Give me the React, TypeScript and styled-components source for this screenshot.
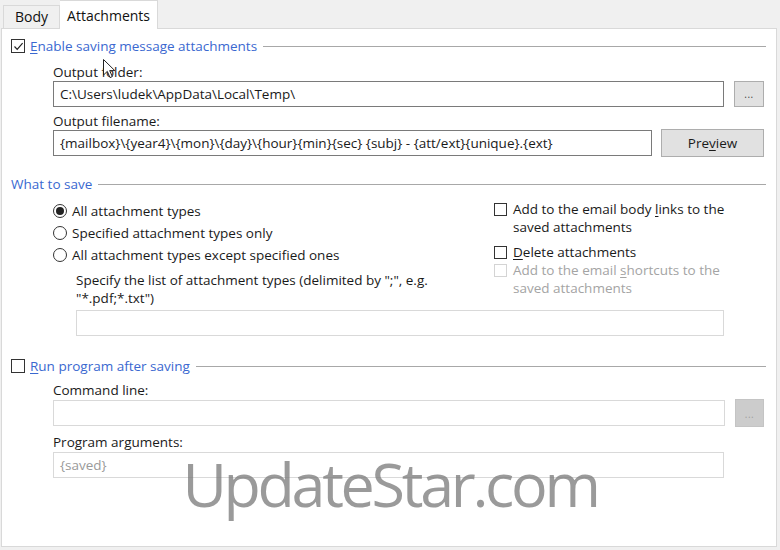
import React from "react";
import styled, { createGlobalStyle } from "styled-components";

const GlobalStyle = createGlobalStyle`
  html, body { margin: 0; padding: 0; background: #f0f0f0; }
  body {
    font-family: "Open Sans", "Noto Sans", "DejaVu Sans", sans-serif;
    font-size: 13.5px;
    color: #1a1a1a;
  }
  * { box-sizing: border-box; }
`;

const Window = styled.div`
  position: relative;
  width: 780px;
  height: 550px;
  padding: 0 3px 3px 1px;
  display: flex;
  flex-direction: column;
  overflow: hidden;
  background: #f0f0f0;
`;

const TabStrip = styled.div`
  display: flex;
  align-items: flex-end;
  height: 28px;
  padding-left: 2px;
`;

const Tab = styled.div<{ $active?: boolean }>`
  height: ${(p) => (p.$active ? "29px" : "23px")};
  margin-bottom: ${(p) => (p.$active ? "-1px" : "0")};
  padding: ${(p) => (p.$active ? "5px 7px 0 7px" : "1px 11px 0 11px")};
  border: 1px solid #d9d9d9;
  border-bottom: none;
  border-left: ${(p) => (p.$active ? "none" : "1px solid #d9d9d9")};
  background: ${(p) => (p.$active ? "#ffffff" : "#f0f0f0")};
  line-height: 20px;
  font-size: 14px;
  color: #111;
  position: relative;
  z-index: 1;
`;

const Panel = styled.div`
  flex: 1;
  background: #ffffff;
  border: 1px solid #d9d9d9;
  padding: 8px 12px 0 9px;
  display: flex;
  flex-direction: column;
`;

const GroupHeader = styled.div<{ $mt?: number }>`
  display: flex;
  align-items: center;
  height: 18px;
  margin-top: ${(p) => p.$mt ?? 0}px;
  color: #3a68d0;
  white-space: nowrap;
`;

const HeaderLine = styled.div`
  flex: 1;
  height: 1px;
  background: #a8a8a8;
  margin-left: 6px;
  margin-right: -2px;
`;

const Acc = styled.span`
  text-decoration: underline;
  text-underline-offset: 2px;
`;

const Box = styled.span<{ $disabled?: boolean }>`
  display: inline-flex;
  align-items: center;
  justify-content: center;
  flex: none;
  width: 13px;
  height: 13px;
  border: 1px solid ${(p) => (p.$disabled ? "#d4d4d4" : "#333")};
  background: #fff;
`;

const HeaderBox = styled(Box)`
  width: 14px;
  height: 14px;
  margin-left: 0;
  margin-right: 5px;
`;

const Field = styled.div`
  margin-left: 42px;
  display: flex;
  flex-direction: column;
`;

const FieldLabel = styled.div<{ $mt?: number }>`
  height: 18px;
  line-height: 18px;
  margin-top: ${(p) => p.$mt ?? 0}px;
  white-space: nowrap;
`;

const InputRow = styled.div<{ $mt?: number }>`
  display: flex;
  align-items: center;
  gap: 10px;
  margin-top: ${(p) => p.$mt ?? 0}px;
`;

const TextBox = styled.div<{ $disabled?: boolean; $h?: number; $ml?: number; $mr?: number }>`
  flex: 1;
  height: ${(p) => p.$h ?? 26}px;
  margin-left: ${(p) => p.$ml ?? 0}px;
  margin-right: ${(p) => p.$mr ?? 0}px;
  border: 1px solid ${(p) => (p.$disabled ? "#d9d9d9" : "#7a7a7a")};
  background: #fff;
  padding: 0 6px;
  display: flex;
  align-items: center;
  white-space: nowrap;
  overflow: hidden;
  color: ${(p) => (p.$disabled ? "#9a9a9a" : "#1a1a1a")};
`;

const Button = styled.div<{ $w: number; $h?: number; $disabled?: boolean }>`
  flex: none;
  width: ${(p) => p.$w}px;
  height: ${(p) => p.$h ?? 26}px;
  border: 1px solid ${(p) => (p.$disabled ? "#c4c4c4" : "#adadad")};
  background: ${(p) => (p.$disabled ? "#cccccc" : "#e1e1e1")};
  display: flex;
  align-items: center;
  justify-content: center;
  color: ${(p) => (p.$disabled ? "#a8a8a8" : "#1a1a1a")};
`;

const Dots = styled.span<{ $disabled?: boolean }>`
  font-size: 10px;
  letter-spacing: 0.5px;
  color: ${(p) => (p.$disabled ? "#a0a0a0" : "#444")};
  margin-top: ${(p) => (p.$disabled ? "2px" : "-1px")};
`;

const Columns = styled.div`
  display: flex;
  margin-top: 7px;
  margin-left: 42px;
`;

const LeftCol = styled.div`
  width: 441px;
  display: flex;
  flex-direction: column;
`;

const RightCol = styled.div`
  flex: 1;
  display: flex;
  flex-direction: column;
`;

const RadioRow = styled.div`
  display: flex;
  align-items: center;
  gap: 5px;
  height: 22px;
`;

const Radio = styled.span<{ $on?: boolean }>`
  flex: none;
  width: 14px;
  height: 14px;
  border-radius: 50%;
  border: 1px solid #333;
  background: #fff;
  display: inline-flex;
  align-items: center;
  justify-content: center;
  &::after {
    content: "";
    display: ${(p) => (p.$on ? "block" : "none")};
    width: 8px;
    height: 8px;
    border-radius: 50%;
    background: #222;
  }
`;

const HintText = styled.div`
  margin-top: 5px;
  margin-left: 23px;
  line-height: 18px;
  white-space: nowrap;
`;

const CheckRow = styled.div<{ $mt?: number; $disabled?: boolean }>`
  display: flex;
  align-items: flex-start;
  gap: 6px;
  margin-top: ${(p) => p.$mt ?? 0}px;
  line-height: 18px;
  color: ${(p) => (p.$disabled ? "#a4a4a4" : "#1a1a1a")};
  white-space: nowrap;
  & > ${Box} {
    margin-top: 3px;
  }
`;

const Watermark = styled.div`
  position: absolute;
  left: 0;
  right: 0;
  top: 453px;
  text-align: center;
  font-family: "Open Sans", "Noto Sans", sans-serif;
  font-size: 61px;
  line-height: 61px;
  letter-spacing: -3.3px;
  color: rgba(120, 120, 120, 0.75);
  pointer-events: none;
`;

const Cursor = styled.svg`
  position: absolute;
  left: 103px;
  top: 59px;
`;

const Check = () => (
  <svg width="11" height="11" viewBox="0 0 11 11">
    <path d="M1.5 5.5 L4.2 8.3 L9.6 2.2" fill="none" stroke="#222" strokeWidth="1.2" />
  </svg>
);

export default function App() {
  return (
    <>
      <GlobalStyle />
      <Window>
        <TabStrip>
          <Tab>Body</Tab>
          <Tab $active>Attachments</Tab>
        </TabStrip>
        <Panel>
          <GroupHeader>
            <HeaderBox>
              <Check />
            </HeaderBox>
            <span>
              <Acc>E</Acc>nable saving message attachments
            </span>
            <HeaderLine />
          </GroupHeader>
          <Field>
            <FieldLabel $mt={8}>Output folder:</FieldLabel>
            <InputRow>
              <TextBox $h={26}>C:\Users\ludek\AppData\Local\Temp\</TextBox>
              <Button $w={30} $h={26}>
                <Dots>...</Dots>
              </Button>
            </InputRow>
            <FieldLabel $mt={5}>Output filename:</FieldLabel>
            <InputRow $mt={-1}>
              <TextBox $h={26} style={{ marginRight: -1 }}>
                {"{mailbox}\\{year4}\\{mon}\\{day}\\{hour}{min}{sec} {subj} - {att/ext}{unique}.{ext}"}
              </TextBox>
              <Button $w={103} $h={28}>
                Pre<Acc>v</Acc>iew
              </Button>
            </InputRow>
          </Field>

          <GroupHeader $mt={18}>
            <span>What to save</span>
            <HeaderLine />
          </GroupHeader>
          <Columns>
            <LeftCol>
              <RadioRow>
                <Radio $on />
                All attachment types
              </RadioRow>
              <RadioRow>
                <Radio />
                Specified attachment types only
              </RadioRow>
              <RadioRow>
                <Radio />
                All attachment types except specified ones
              </RadioRow>
              <HintText>
                Specify the list of attachment types (delimited by ";", e.g.
                <br />
                "*.pdf;*.txt")
              </HintText>
            </LeftCol>
            <RightCol>
              <CheckRow>
                <Box />
                <span>
                  Add to the email body <Acc>l</Acc>inks to the
                  <br />
                  saved attachments
                </span>
              </CheckRow>
              <CheckRow $mt={7}>
                <Box />
                <span>
                  <Acc>D</Acc>elete attachments
                </span>
              </CheckRow>
              <CheckRow $disabled>
                <Box $disabled />
                <span>
                  Add to the email <Acc>s</Acc>hortcuts to the
                  <br />
                  saved attachments
                </span>
              </CheckRow>
            </RightCol>
          </Columns>
          <Field>
            <InputRow $mt={3}>
              <TextBox $disabled $h={26} $ml={23} $mr={40} />
            </InputRow>
          </Field>

          <GroupHeader $mt={21}>
            <HeaderBox />
            <span>
              <Acc>R</Acc>un program after saving
            </span>
            <HeaderLine />
          </GroupHeader>
          <Field>
            <FieldLabel $mt={6}>Command line:</FieldLabel>
            <InputRow>
              <TextBox $disabled $h={26} />
              <Button $w={29} $h={28} $disabled>
                <Dots $disabled>...</Dots>
              </Button>
            </InputRow>
            <FieldLabel $mt={6}>Program arguments:</FieldLabel>
            <InputRow $mt={1}>
              <TextBox $disabled $h={26} $mr={40}>
                {"{saved}"}
              </TextBox>
            </InputRow>
          </Field>
        </Panel>
        <Watermark>UpdateStar.com</Watermark>
        <Cursor width="13" height="20" viewBox="0 0 13 20">
          <path
            d="M0.5 0.5 L0.5 16 L4.3 12.4 L7 18.6 L9.3 17.6 L6.7 11.6 L11.8 11.6 Z"
            fill="#fff"
            stroke="#222"
            strokeWidth="1"
            strokeLinejoin="round"
          />
        </Cursor>
      </Window>
    </>
  );
}
